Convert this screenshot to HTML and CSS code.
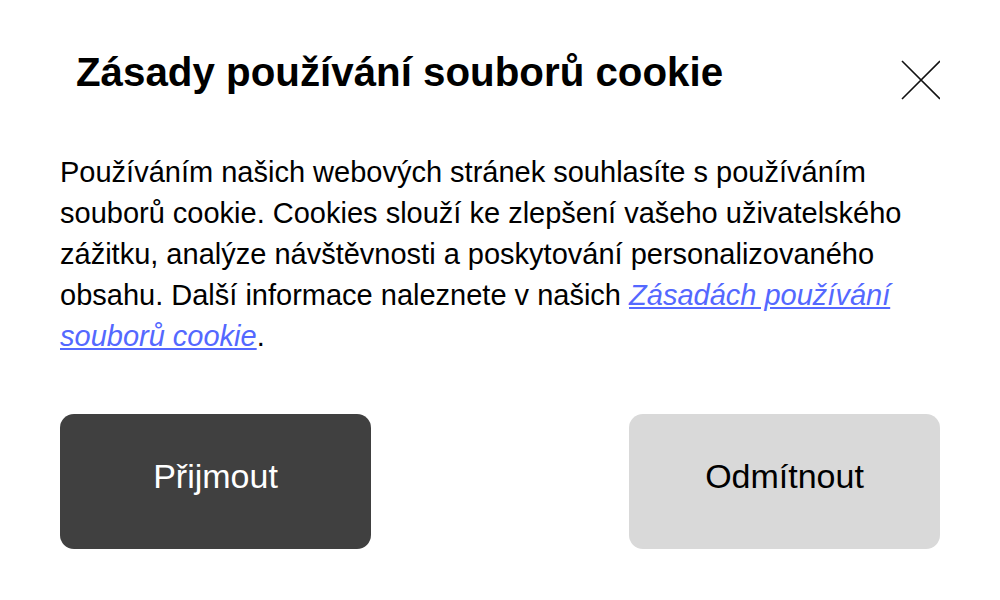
FILE: index.html
```html
<!DOCTYPE html>
<html lang="cs">
<head>
<meta charset="utf-8">
<link rel="stylesheet" href="styles.css">
</head>
<body>
<div class="dialog">
  <div class="header">
    <h1 class="title">Zásady používání souborů cookie</h1>
    <button class="close" aria-label="Zavřít">
      <svg width="40" height="40" viewBox="0 0 40 40"><path d="M2 1 L40 39 M40 1 L2 39" stroke="#111" stroke-width="1.6" fill="none"/></svg>
    </button>
  </div>
  <p class="text">Používáním našich webových stránek souhlasíte s používáním souborů cookie. Cookies slouží ke zlepšení vašeho uživatelského zážitku, analýze návštěvnosti a poskytování personalizovaného obsahu. Další informace naleznete v našich <a href="#" class="link">Zásadách používání souborů cookie</a>.</p>
  <div class="actions">
    <button class="btn btn-accept">Přijmout</button>
    <button class="btn btn-reject">Odmítnout</button>
  </div>
</div>
</body>
</html>
```
FILE: styles.css
```css
html, body {
  margin: 0;
  background: #fff;
}
body {
  font-family: "Liberation Sans", Arial, sans-serif;
  color: #000;
}
.dialog {
  padding: 51px 60px 0 60px;
}
.header {
  display: flex;
  justify-content: space-between;
  align-items: flex-start;
  height: 49px;
}
.title {
  margin: 0;
  padding-left: 16px;
  font-size: 40.3px;
  font-weight: bold;
  line-height: 44px;
}
.close {
  border: 0;
  background: none;
  padding: 0;
  margin-top: 9px;
  width: 40px;
  height: 40px;
  cursor: pointer;
}
.close svg { display: block; }
.text {
  margin: 52px 0 0 0;
  font-size: 29px;
  line-height: 41px;
}
.link {
  color: #5468ff;
  font-style: italic;
  text-decoration: underline;
}
.actions {
  display: flex;
  justify-content: space-between;
  margin-top: 57px;
}
.btn {
  width: 311px;
  height: 135px;
  padding: 0 0 10px 0;
  border: 0;
  border-radius: 14px;
  font-family: "Liberation Sans", Arial, sans-serif;
  font-size: 34px;
}
.btn-accept {
  background: #404040;
  color: #fff;
}
.btn-reject {
  background: #d9d9d9;
  color: #000;
}
```
